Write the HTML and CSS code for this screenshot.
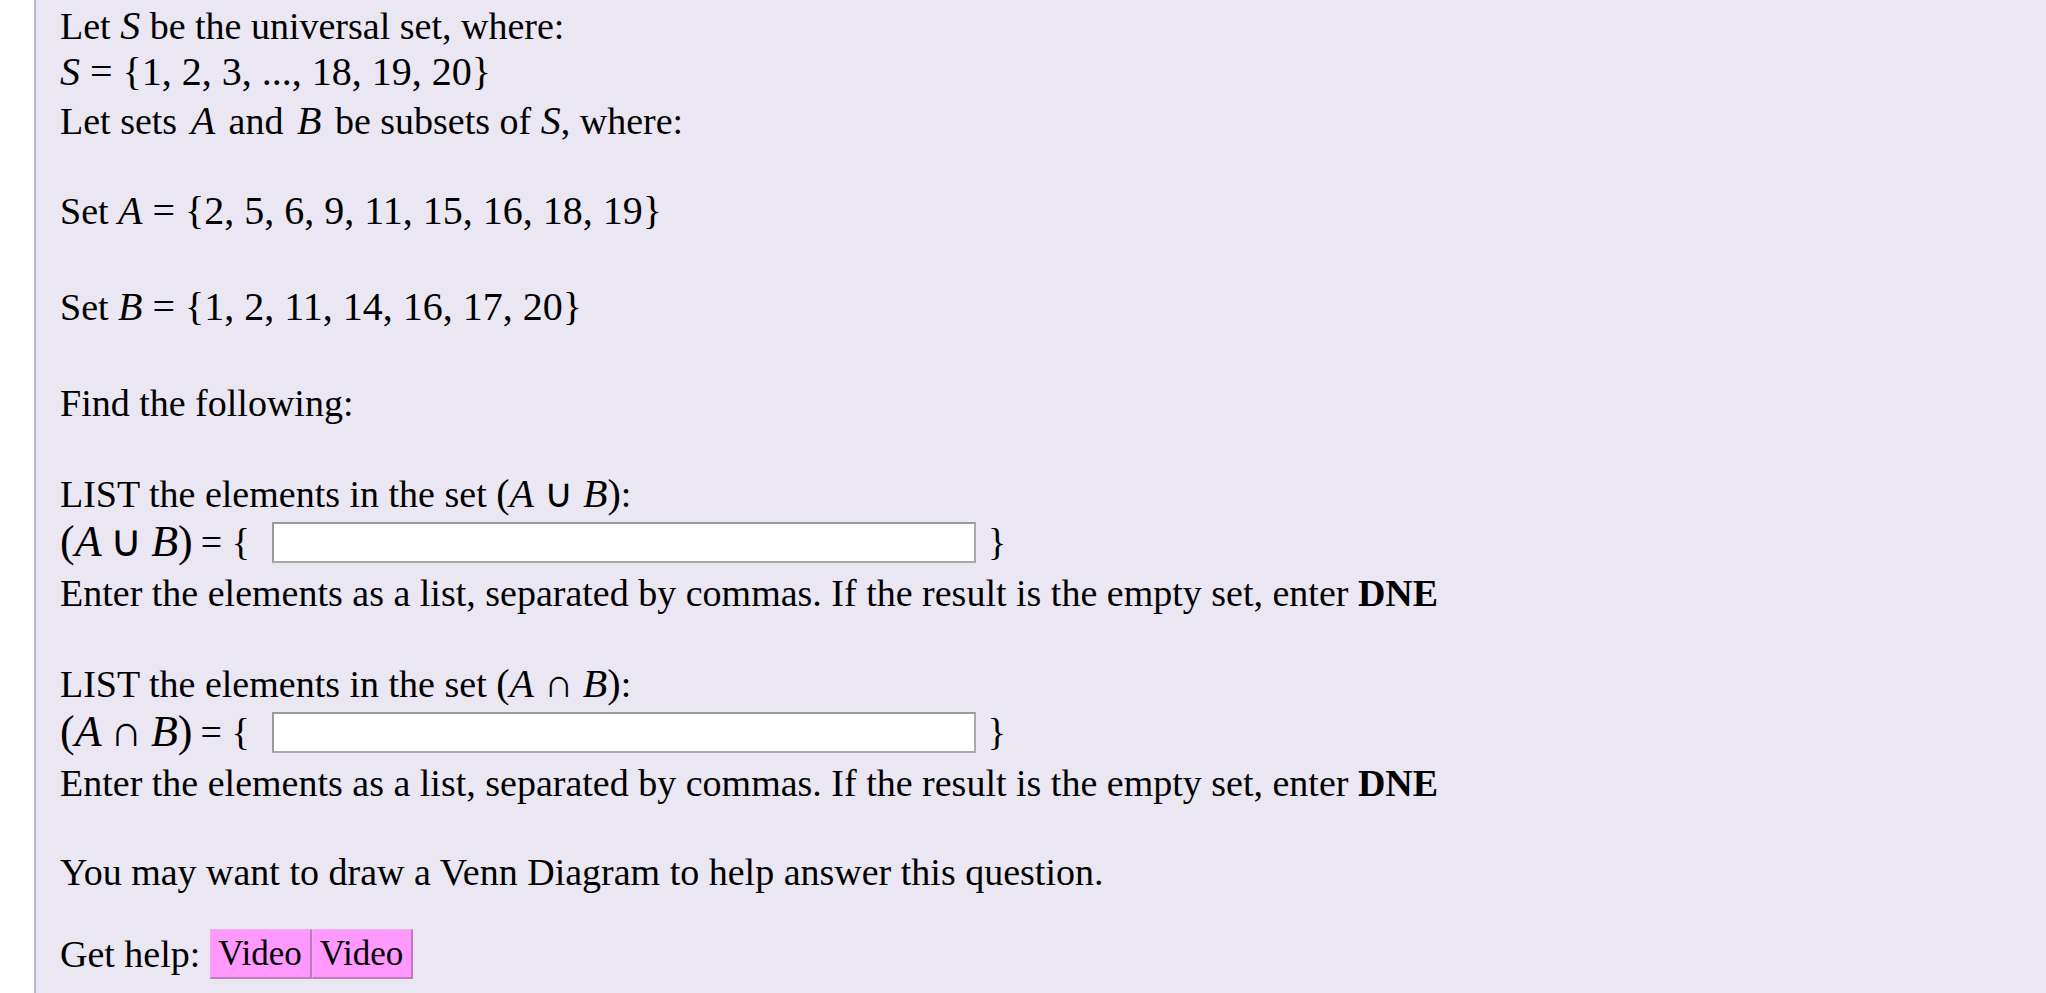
FILE: index.html
```html
<!DOCTYPE html>
<html>
<head>
<meta charset="utf-8">
<link rel="stylesheet" href="styles.css">
</head>
<body>
<div class="page">
  <div class="line">Let <span class="m"><i>S</i></span> be the universal set, where:</div>
  <div class="line tall"><span class="m"><i>S</i> = {1, 2, 3, ..., 18, 19, 20}</span></div>
  <div class="line">Let sets <span class="m wide"><i>A</i></span> and <span class="m wide"><i>B</i></span> be subsets of <span class="m"><i>S</i></span>, where:</div>

  <div class="line gap-a">Set <span class="m"><i>A</i> = {2, 5, 6, 9, 11, 15, 16, 18, 19}</span></div>
  <div class="line gap-b">Set <span class="m"><i>B</i> = {1, 2, 11, 14, 16, 17, 20}</span></div>
  <div class="line gap-b">Find the following:</div>

  <div class="line gap-c">LIST the elements in the set <span class="m">(<i>A</i> ∪ <i>B</i>)</span>:</div>
  <div class="line row"><span class="m big">(<i>A</i>&#8201;∪&#8201;<i>B</i>)</span> = { <input class="ans" type="text"> }</div>
  <div class="line note">Enter the elements as a list, separated by commas. If the result is the empty set, enter <b>DNE</b></div>

  <div class="line gap-c">LIST the elements in the set <span class="m">(<i>A</i> ∩ <i>B</i>)</span>:</div>
  <div class="line row"><span class="m big">(<i>A</i>&#8201;∩&#8201;<i>B</i>)</span> = { <input class="ans" type="text"> }</div>
  <div class="line note">Enter the elements as a list, separated by commas. If the result is the empty set, enter <b>DNE</b></div>

  <div class="line gap-d">You may want to draw a Venn Diagram to help answer this question.</div>

  <div class="help">
    <span>Get help:</span>
    <span class="btns"><span class="btn">Video</span><span class="btn">Video</span></span>
  </div>
</div>
</body>
</html>
```
FILE: styles.css
```css
html, body {
  margin: 0;
  padding: 0;
  background: #ffffff;
}
.page {
  margin-left: 34px;
  border-left: 2px solid #b7b7dd;
  background: #eae7f2;
  min-height: 993px;
  box-sizing: border-box;
  padding: 3px 0 0 24px;
  font-family: "Liberation Serif", "Times New Roman", serif;
  font-size: 38px;
  color: #000;
}
.line {
  height: 46px;
  line-height: 46px;
  white-space: nowrap;
}
.line.tall {
  height: 49px;
  line-height: 46px;
}
.gap-a { margin-top: 44px; }
.gap-b { margin-top: 50px; }
.gap-c { margin-top: 45px; }
.gap-d { margin-top: 43px; }
.line.row {
  height: 50px;
  line-height: 50px;
  display: flex;
  align-items: center;
}
.line.note {
  margin-top: 3px;
}
.m {
  font-size: 40px;
}
.m.wide {
  padding: 0 4px;
}
.m i {
  font-style: italic;
}
.m.big {
  font-size: 44px;
  margin-right: 8px;
}
.ans {
  width: 704px;
  height: 41px;
  box-sizing: border-box;
  border: 2px solid #a9a9a9;
  border-top-color: #9a9a9a;
  border-left-color: #9a9a9a;
  background: #fff;
  margin: 0 12px 0 22px;
  padding: 0;
}
.help {
  margin-top: 34px;
  display: flex;
  align-items: center;
  height: 50px;
}
.btns {
  display: flex;
  margin-left: 10px;
}
.btn {
  background: #ff99ff;
  border-right: 2px solid #c07ac0;
  border-bottom: 2px solid #c07ac0;
  border-top: 1px solid #eab0ea;
  border-left: 1px solid #eab0ea;
  padding: 0 8px 0 7px;
  height: 47px;
  line-height: 47px;
  font-size: 35px;
}
```
